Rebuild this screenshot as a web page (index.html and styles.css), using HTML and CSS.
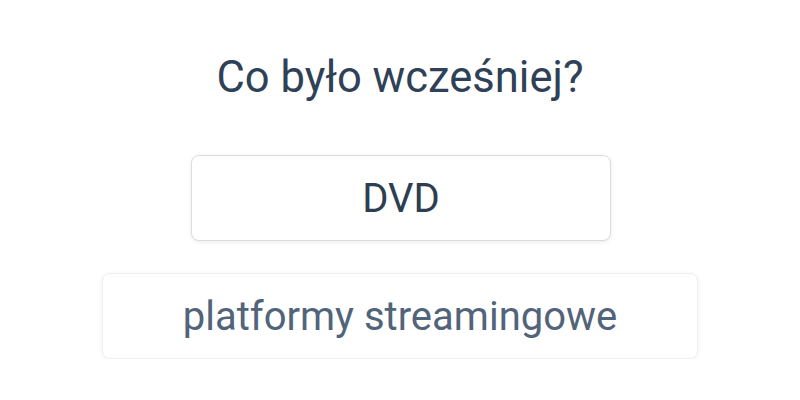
FILE: index.html
```html
<!DOCTYPE html>
<html lang="pl">
<head>
    <meta charset="UTF-8">
    <meta name="viewport" content="width=device-width, initial-scale=1.0">
    <title>Co było wcześniej?</title>
    <link rel="stylesheet" href="styles.css">
</head>
<body>
    <main class="quiz">
        <h1 class="question">Co było wcześniej?</h1>
        <div class="answers">
            <button class="answer">DVD</button>
            <button class="answer answer-entering">platformy streamingowe</button>
        </div>
    </main>
</body>
</html>
```

FILE: styles.css
```css
body {
    margin: 0;
    padding: 0;
    background: #fff;
    font-family: Roboto, "Liberation Sans", sans-serif;
    color: #2c3e50;
}
.quiz {
    display: flex;
    flex-direction: column;
    align-items: center;
    padding-top: 52px;
}
.question {
    margin: 0;
    font-size: 43.5px;
    font-weight: 400;
    line-height: 52px;
    color: #2f4157;
}
.answers {
    display: flex;
    flex-direction: column;
    align-items: center;
    gap: 32px;
    margin-top: 51px;
}
.answer {
    min-width: 420px;
    height: 86px;
    padding: 0 80px;
    margin-left: 2px;
    font-family: inherit;
    font-size: 40px;
    color: #2c3e50;
    background: #fff;
    border: 1px solid #dcdcdc;
    border-radius: 8px;
    box-shadow: 0 1px 4px rgba(0, 0, 0, 0.08);
    cursor: pointer;
}
.answer-entering {
    margin-left: 0;
    color: #52647a;
    border-color: #f0f0f0;
    box-shadow: 0 1px 5px rgba(0, 0, 0, 0.06);
}
```
